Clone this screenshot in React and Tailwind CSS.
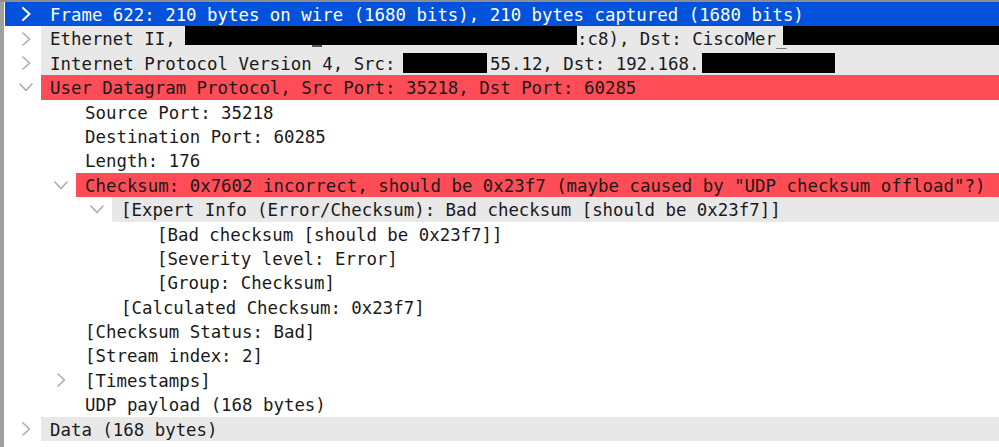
import React from "react";

const PAD = { 0: "w-[36px]", 1: "w-[71px]", 2: "w-[107px]", 3: "w-[143px]" };

function Chevron({ dir, white }) {
  const stroke = white ? "#ffffff" : "#a9a9a9";
  const sw = white ? 2 : 1.5;
  return (
    <div className="w-[14px] h-[14px] mr-[8px] flex items-center justify-center">
      {dir === "right" ? (
        <svg width="14" height="14" viewBox="0 0 14 14" fill="none">
          <path d="M4 1 L10.5 7 L4 13" stroke={stroke} strokeWidth={sw} strokeLinecap="round" strokeLinejoin="round" />
        </svg>
      ) : dir === "down" ? (
        <svg width="14" height="14" viewBox="0 0 14 14" fill="none">
          <path d="M1 4 L7 10.5 L13 4" stroke={stroke} strokeWidth={sw} strokeLinecap="round" strokeLinejoin="round" />
        </svg>
      ) : null}
    </div>
  );
}

function Row({ level = 0, chev = null, hl = null, children }) {
  const rowBg = hl === "sel" ? "bg-[#0352dc]" : "bg-white";
  const textBg =
    hl === "gray" ? "bg-[#e8e8e8]" : hl === "red" ? "bg-[#ff4c56]" : "";
  const textColor = hl === "sel" ? "text-white" : "text-[#1a1a1a]";
  return (
    <div className={`h-[24.4px] flex shrink-0 ${rowBg}`}>
      <div className={`${PAD[level]} shrink-0 flex items-center justify-end`}>
        {chev && <Chevron dir={chev} white={hl === "sel"} />}
      </div>
      <div className={`flex-1 flex items-center pl-[9px] pt-[3px] whitespace-pre ${textBg} ${textColor}`}>
        {children}
      </div>
    </div>
  );
}

export default function App() {
  return (
    <div className="w-[999px] h-[447px] bg-white flex flex-col overflow-hidden text-[17.4px] leading-none font-['DejaVu_Sans_Mono',monospace]">
      <div className="h-[2px] bg-[#8e8e8e] shrink-0" />
      <div className="flex flex-1">
        <div className="w-[4px] bg-[#a0a0a0] shrink-0" />
        <div className="w-[1px] shrink-0" />
        <div className="flex-1 flex flex-col">
          <Row level={0} chev="right" hl="sel">
            Frame 622: 210 bytes on wire (1680 bits), 210 bytes captured (1680 bits)
          </Row>
          <Row level={0} chev="right" hl="gray">
            <span>Ethernet II,</span>
            <span className="ml-[9.4px] w-[392px] h-[19px] self-start mt-[-3px] bg-black relative">
              <span className="absolute left-[127px] bottom-[-2px] w-[10px] h-[2px] bg-[#555]" />
            </span>
            <span>:c8), Dst: CiscoMer_</span>
            <span className="ml-[-3px] flex-1 h-[19px] self-start mt-[-3px] bg-black" />
          </Row>
          <Row level={0} chev="right" hl="gray">
            <span>Internet Protocol Version 4, Src:</span>
            <span className="ml-[7.5px] w-[84px] h-[20px] mt-[-3px] bg-black" />
            <span className="ml-[3px]">55.12, Dst: 192.168.</span>
            <span className="ml-[2.6px] w-[133px] h-[20px] mt-[-3px] bg-black" />
          </Row>
          <Row level={0} chev="down" hl="red">
            User Datagram Protocol, Src Port: 35218, Dst Port: 60285
          </Row>
          <Row level={1}>Source Port: 35218</Row>
          <Row level={1}>Destination Port: 60285</Row>
          <Row level={1}>Length: 176</Row>
          <Row level={1} chev="down" hl="red">
            Checksum: 0x7602 incorrect, should be 0x23f7 (maybe caused by "UDP checksum offload"?)
          </Row>
          <Row level={2} chev="down" hl="gray">
            [Expert Info (Error/Checksum): Bad checksum [should be 0x23f7]]
          </Row>
          <Row level={3}>[Bad checksum [should be 0x23f7]]</Row>
          <Row level={3}>[Severity level: Error]</Row>
          <Row level={3}>[Group: Checksum]</Row>
          <Row level={2}>[Calculated Checksum: 0x23f7]</Row>
          <Row level={1}>[Checksum Status: Bad]</Row>
          <Row level={1}>[Stream index: 2]</Row>
          <Row level={1} chev="right">[Timestamps]</Row>
          <Row level={1}>UDP payload (168 bytes)</Row>
          <Row level={0} chev="right" hl="gray">
            Data (168 bytes)
          </Row>
        </div>
      </div>
    </div>
  );
}
